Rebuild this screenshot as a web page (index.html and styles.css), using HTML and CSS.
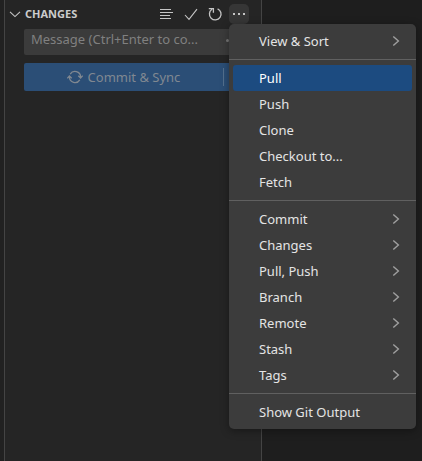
FILE: index.html
```html
<!DOCTYPE html>
<html lang="en">
<head>
<meta charset="utf-8">
<title>Source Control</title>
<link rel="stylesheet" href="styles.css">
</head>
<body>
<svg width="0" height="0" class="defs"><symbol id="chev" viewBox="0 0 16 16"><path d="M5.3 3.4 10.4 8l-5.1 4.6"/></symbol></svg>
<div class="window">
  <aside class="rail"></aside>
  <section class="panel">
    <header class="header">
      <svg class="icon twisty" viewBox="0 0 16 16"><path d="M3 5.8 8 10.6l5-4.8"/></svg>
      <h2 class="title">CHANGES</h2>
      <nav class="actions">
        <svg class="icon lines" viewBox="0 0 16 16"><path d="M1 3.5h11M1 6.5h13M1 9.5h10M1 12.5h11"/></svg>
        <svg class="icon" viewBox="0 0 16 16"><path d="M2 9l4 4.3L14 3.2"/></svg>
        <svg class="icon reload" viewBox="0 0 16 16"><path d="M1.8 2.6h4.6v4.2M5 3.3A5.8 5.8 0 1 0 10.6 2.8"/></svg>
        <span class="more"><svg class="icon dots" viewBox="0 0 16 16"><path d="M2 7h2v2H2zM7 7h2v2H7zM12 7h2v2h-2z"/></svg></span>
      </nav>
    </header>
    <div class="message"><span>Message (Ctrl+Enter to co...</span><i class="spark"></i></div>
    <div class="commit">
      <div class="commit-main">
        <svg class="icon sync" viewBox="0 0 16 16"><path d="M3.2 5.2A5.6 5.6 0 0 1 13.6 8M12.8 10.8A5.6 5.6 0 0 1 2.4 8M.3 9.3l2.1-2.3 2.3 2.3M11.3 6.7l2.3 2.3 2.1-2.3"/></svg>
        <span>Commit &amp; Sync</span>
      </div>
      <i class="divider"></i>
    </div>
  </section>
  <main class="editor"></main>
</div>
<div class="menu">
  <div class="item">View &amp; Sort<svg class="chev"><use href="#chev"/></svg></div>
  <hr>
  <div class="item selected">Pull</div>
  <div class="item">Push</div>
  <div class="item">Clone</div>
  <div class="item">Checkout to...</div>
  <div class="item">Fetch</div>
  <hr>
  <div class="item">Commit<svg class="chev"><use href="#chev"/></svg></div>
  <div class="item">Changes<svg class="chev"><use href="#chev"/></svg></div>
  <div class="item">Pull, Push<svg class="chev"><use href="#chev"/></svg></div>
  <div class="item">Branch<svg class="chev"><use href="#chev"/></svg></div>
  <div class="item">Remote<svg class="chev"><use href="#chev"/></svg></div>
  <div class="item">Stash<svg class="chev"><use href="#chev"/></svg></div>
  <div class="item">Tags<svg class="chev"><use href="#chev"/></svg></div>
  <hr>
  <div class="item">Show Git Output</div>
</div>
</body>
</html>
```
FILE: styles.css
```css
* { box-sizing: border-box; }
body {
  margin: 0;
  background: #1e1e1e;
  font: 13px/26px "Noto Sans", sans-serif;
  overflow: hidden;
}
.defs { position: absolute; }
.window { display: flex; height: 461px; }
.rail { width: 5px; background: #212121; border-right: 1px solid #444; }
.panel { width: 257px; background: #252525; border-right: 1px solid #444; }
.editor { flex: 1; background: #1e1e1e; }
.header { display: flex; align-items: center; height: 28px; padding-left: 2px; }
.icon { display: block; width: 16px; height: 16px; fill: none; stroke: #c5c5c5; stroke-width: 1.1; }
.reload { stroke-width: 1.3; }
.lines { stroke-width: 1.2; }
.title { margin: 0 0 0 2px; font-size: 11px; font-weight: 700; line-height: 28px; color: #ccc; }
.actions { display: flex; align-items: center; gap: 8px; margin-left: auto; padding-right: 12px; }
.more { display: flex; align-items: center; justify-content: center; width: 20px; height: 20px; margin-left: -2px; border-radius: 5px; background: #363636; }
.dots { fill: #c5c5c5; stroke: none; }
.message {
  display: flex;
  align-items: center;
  justify-content: space-between;
  height: 26px;
  margin: 1px 12px 0 19px;
  padding: 0 20px 6px 7px;
  border-radius: 2px;
  background: #3b3b3b;
  color: #808080;
  line-height: 20px;
  white-space: nowrap;
}
.spark { width: 3px; height: 3px; margin-top: 2px; border-radius: 50%; background: #777; }
.commit {
  display: flex;
  align-items: center;
  height: 28px;
  margin: 8px 12px 0 19px;
  border-radius: 2px;
  background: #2b4e76;
  color: #808891;
}
.commit-main { display: flex; flex: 1; align-items: center; justify-content: center; gap: 5px; }
.sync { stroke: #808891; stroke-width: 1.3; }
.divider { width: 1px; height: 18px; margin-right: 25px; background: #53708f; }
.menu {
  position: absolute;
  left: 229px;
  top: 24px;
  width: 187px;
  height: 405px;
  padding: 4px 0;
  border-radius: 5px;
  background: #3c3c3c;
  color: #e4e4e4;
  box-shadow: 0 2px 8px rgba(0, 0, 0, .36);
}
.item { display: flex; align-items: center; justify-content: space-between; height: 26px; margin: 0 4px; padding: 0 8px 0 26px; border-radius: 3px; }
.selected { background: #1c4b80; color: #fff; }
.chev { width: 16px; height: 16px; fill: none; stroke: #a0a0a0; stroke-width: 1.4; }
hr { height: 1px; margin: 5px 0; border: 0; background: #606060; }
```
